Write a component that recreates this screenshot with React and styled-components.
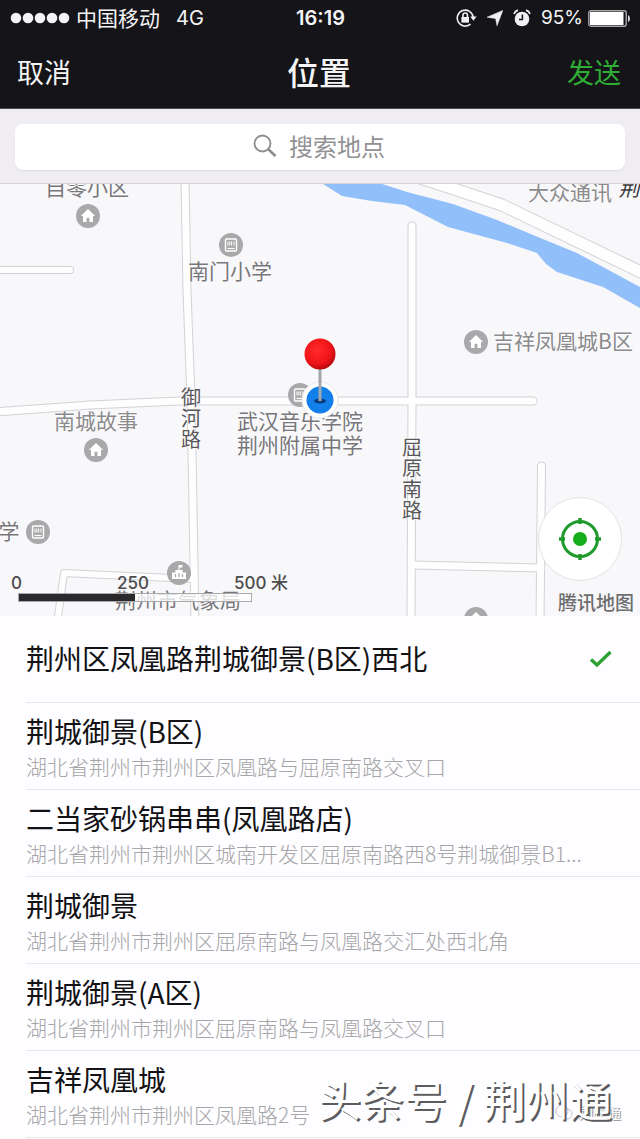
import React from "react";
import styled, { createGlobalStyle } from "styled-components";

const cjk = '"Noto Sans CJK SC", "Noto Sans", sans-serif';
const latin = 'Inter, "Noto Sans CJK SC", sans-serif';

const GlobalStyle = createGlobalStyle`
  *, *::before, *::after { box-sizing: border-box; }
  body { margin: 0; background: #fefdff; font-family: ${cjk}; }
  button, input { font-family: inherit; }
`;

const Page = styled.div`
  position: relative;
  min-height: 100vh;
  overflow: hidden;
`;

const TopBar = styled.header`
  background: #151418;
  color: #f4f4f6;
  border-bottom: 1px solid #4a494c;
`;

const StatusBar = styled.div`
  display: grid;
  grid-template-columns: 1fr auto 1fr;
  align-items: center;
  height: 36px;
  padding: 0 9px 0 10px;
  font-family: ${latin};
  font-size: 20px;
  line-height: 24px;
`;

const StatusGroup = styled.div`
  display: flex;
  align-items: center;
  justify-content: ${(p) => (p.$end ? "flex-end" : "flex-start")};
  gap: ${(p) => p.$gap}px;
`;

const Carrier = styled.span`
  padding-bottom: 2px;
  font-family: ${cjk};
  font-size: 21px;
  margin-right: 10px;
`;

const Clock = styled.time`
  font-weight: 600;
`;

const Charge = styled.span`
  font-size: 19px;
`;

const NavBar = styled.nav`
  display: grid;
  grid-template-columns: 1fr auto 1fr;
  align-items: center;
  height: 72px;
  padding: 0 19px 0 17px;
`;

const NavButton = styled.button`
  justify-self: ${(p) => (p.$end ? "end" : "start")};
  padding: 0;
  border: 0;
  background: none;
  color: ${(p) => (p.$end ? "#2fae35" : "#f4f4f6")};
  font-size: 27px;
  line-height: 36px;
`;

const NavTitle = styled.h1`
  margin: 0;
  padding-bottom: 2px;
  font-size: 32px;
  line-height: 36px;
  font-weight: 500;
`;

const SearchBar = styled.form`
  padding: 15px 15px 13px;
  background: #efedf1;
  border-bottom: 1px solid #d4d2d6;
`;

const SearchField = styled.label`
  display: flex;
  align-items: center;
  justify-content: center;
  gap: 12px;
  height: 46px;
  padding: 0 2px 2px 0;
  border-radius: 8px;
  background: #fff;
  box-shadow: 0 1px 1px #dddbe0;
`;

const SearchInput = styled.input`
  field-sizing: content;
  min-width: 4em;
  padding: 0;
  border: 0;
  outline: 0;
  background: none;
  color: #333;
  font-size: 24px;
  line-height: 36px;
  &::placeholder { color: #929194; opacity: 1; }
`;

const MapView = styled.section`
  position: relative;
  height: 432px;
  overflow: hidden;
  background: #f8f7fa;
`;

const MapDrawing = styled.svg`
  display: block;
  width: 100%;
  height: 100%;
`;

const Placed = styled.div`
  position: absolute;
  left: ${(p) => (p.$x / 640) * 100}%;
  top: ${(p) => p.$y}px;
  transform: translate(-50%, -50%);
`;

const PlaceName = styled(Placed)`
  color: ${(p) => p.$color || "#77767a"};
  font-size: 21px;
  line-height: 24px;
  white-space: nowrap;
  text-shadow: 0 0 2px #fff, 0 0 2px #fff;
`;

const RoadName = styled(Placed)`
  width: 20px;
  color: #58575a;
  font-size: 20px;
  line-height: 21px;
  text-align: center;
  text-shadow: 0 0 2px #fff, 0 0 2px #fff;
`;

const TiltedName = styled(PlaceName)`
  color: #3c3b3e;
  font-style: italic;
`;

const Marker = styled(Placed)`
  width: 24px;
  height: 24px;
  svg { display: block; }
`;

const PinPlace = styled(Placed)`
  svg { display: block; }
`;

const MapControls = styled.div`
  position: absolute;
  inset: 0;
  display: flex;
  align-items: flex-end;
  justify-content: space-between;
  padding: 0 6px 2px 11px;
`;

const ScaleRuler = styled.div`
  padding-bottom: 12px;
  color: #4c4b4e;
  font-family: ${latin};
  font-size: 17px;
  font-weight: 500;
  line-height: 20px;
`;

const ScaleLabels = styled.div`
  display: grid;
  grid-template-columns: 106px 117px auto;
`;

const ScaleBar = styled.div`
  width: 234px;
  height: 9px;
  margin-left: 7px;
  border: 1px solid #aaa9ab;
  background: linear-gradient(90deg, #2b292c 50%, rgba(255, 255, 255, 0.75) 50%);
`;

const LocateColumn = styled.div`
  display: flex;
  flex-direction: column;
  align-items: flex-end;
  gap: 9px;
`;

const LocateButton = styled.button`
  display: grid;
  place-items: center;
  width: 84px;
  height: 84px;
  margin-right: 12px;
  padding: 0;
  border: 1px solid #e4e3e6;
  border-radius: 50%;
  background: #fff;
`;

const Provider = styled.span`
  color: #6e6d70;
  font-size: 19px;
  font-weight: 500;
  line-height: 24px;
`;

const PlaceList = styled.ul`
  margin: 0;
  padding: 0;
  list-style: none;
`;

const PlaceItem = styled.li`
  padding-left: 26px;
`;

const PlaceButton = styled.button`
  display: flex;
  align-items: center;
  justify-content: space-between;
  width: 100%;
  height: 87px;
  padding: 0 27px 2px 0;
  border: 0;
  border-bottom: 1px solid #e9e8eb;
  background: none;
  text-align: left;
`;

const PlaceText = styled.span`
  display: flex;
  flex-direction: column;
  gap: 5px;
  min-width: 0;
`;

const PlaceTitle = styled.span`
  color: #131215;
  font-size: 28px;
  line-height: 36px;
  white-space: nowrap;
`;

const PlaceAddress = styled.span`
  color: #a6a5a8;
  font-size: 21px;
  line-height: 24px;
  font-weight: 300;
  white-space: nowrap;
`;

const Watermark = styled.div`
  position: absolute;
  right: 28px;
  bottom: 16px;
  color: #fff;
  font-size: 43px;
  line-height: 50px;
  white-space: nowrap;
  text-shadow: 2px 2px 0 #5c5b5e;
`;

const AccountMark = styled.div`
  position: absolute;
  right: 19px;
  bottom: 17px;
  display: flex;
  align-items: center;
  gap: 6px;
  color: #fff;
  font-size: 14px;
  line-height: 20px;
  text-shadow: 1px 1px 0 #999, -1px 0 0 #bbb;
`;

const SignalDots = () => (
  <svg width="60" height="12" viewBox="0 0 60 12" aria-hidden="true" fill="#f4f4f6">
    {[6, 18, 30, 42, 54].map((x) => <circle key={x} cx={x} cy="6" r="5.3" />)}
  </svg>
);

const RotationLock = () => (
  <svg width="21" height="20" viewBox="0 0 21 20" aria-hidden="true" fill="none" stroke="#f0f0f2" strokeWidth="1.6">
    <path d="M14.5 16.2A8 8 0 1 1 17.2 9" />
    <path d="M14.2 8.6h6.4l-3.2 4.2z" fill="#f0f0f2" stroke="none" />
    <rect x="5.4" y="9" width="7.6" height="5.6" fill="#f0f0f2" stroke="none" />
    <path d="M7 9V7.2a2.2 2.2 0 0 1 4.4 0V9" />
  </svg>
);

const LocationArrow = () => (
  <svg width="16" height="16" viewBox="0 0 16 16" aria-hidden="true" fill="#f0f0f2">
    <path d="M15.8.4 10 15.8 8.600 8.600 0 7.200z" stroke="#f0f0f2" strokeWidth=".5" />
  </svg>
);

const AlarmClock = () => (
  <svg width="18" height="18" viewBox="0 0 18 18" aria-hidden="true" fill="none">
    <circle cx="9" cy="10" r="7.300" fill="#f0f0f2" />
    <path d="M1 5Q2 2 5 1.200M17 5Q16 2 13 1.200" stroke="#f0f0f2" strokeWidth="1.8" />
    <path d="M9.400 5.600V10.600H6" stroke="#151418" strokeWidth="1.5" />
  </svg>
);

const Battery = () => (
  <svg width="43" height="17" viewBox="0 0 43 17" aria-hidden="true">
    <rect x=".8" y=".8" width="37.4" height="15.4" rx="2" fill="none" stroke="#a9a9ac" strokeWidth="1.4" />
    <rect x="2" y="2" width="33.5" height="13" fill="#fff" />
    <path d="M40 5q2 1 2 3.500t-2 3.500z" fill="#dcdcde" />
  </svg>
);

const Magnifier = () => (
  <svg width="24" height="24" viewBox="0 0 24 24" aria-hidden="true" fill="none" stroke="#8c8b8e">
    <circle cx="9.500" cy="9.500" r="8" strokeWidth="1.8" />
    <path d="M15.500 15.500 22.500 22" strokeWidth="2.600" />
  </svg>
);

const glyphs = {
  home: <path d="M12 5 4.800 12H7v6h3.600v-4.200h2.800V18H17v-6h2.200z" fill="#fff" />,
  school: (
    <g fill="none" stroke="#fff">
      <rect x="6.500" y="6" width="11" height="12" rx="1" strokeWidth="1.4" />
      <path d="M9 8.500v4M10.800 8.500v4M12.600 8.500v4M15 8.500v4" strokeWidth="1" />
      <path d="M8.500 15.500h7" strokeWidth="1.2" />
    </g>
  ),
  office: (
    <g>
      <path d="M11.400 4h4v2.600h-2.800V9h3v2.400H19V18H5v-6.600h3.400V9h3z" fill="#fff" />
      <path d="M8.500 13v3M12 12v4M15.500 13v3" stroke="#a9a8ab" strokeWidth="1.2" />
    </g>
  ),
};

const Poi = ({ kind, x, y }) => (
  <Marker $x={x} $y={y}>
    <svg width="24" height="24" viewBox="0 0 24 24" aria-hidden="true">
      <circle cx="12" cy="12" r="12" fill="#a9a8ab" />
      {glyphs[kind]}
    </svg>
  </Marker>
);

const pois = [
  { kind: "home", x: 88, y: 32 },
  { kind: "school", x: 231, y: 61 },
  { kind: "home", x: 476, y: 158 },
  { kind: "school", x: 300, y: 211 },
  { kind: "home", x: 96, y: 266 },
  { kind: "school", x: 38, y: 348 },
  { kind: "office", x: 179, y: 389 },
  { kind: "home", x: 476, y: 435 },
];

const soft = "#8b8a8d";

const names = [
  { text: "自零小区", x: 87, y: 2 },
  { text: "南门小学", x: 230, y: 86 },
  { text: "大众通讯", x: 570, y: 7, color: soft },
  { text: "吉祥凤凰城B区", x: 563, y: 156, color: soft },
  { text: "南城故事", x: 96, y: 236, color: soft },
  { text: "武汉音乐学院\n荆州附属中学", x: 300, y: 248 },
  { text: "学", x: 9, y: 346 },
  { text: "荆州市气象局", x: 178, y: 415 },
];

const roads = [
  { d: "M185 -5 187 106 191 216 192 266 195 440", w: 7 },
  { d: "M-5 228 90 221 180 217H533", w: 7 },
  { d: "M412 42V216L411 440", w: 7 },
  { d: "M412 381 541 384", w: 7 },
  { d: "M541.500 282 540 440", w: 7 },
  { d: "M-5 86H70", w: 6 },
  { d: "M57 440 64 389 193 395", w: 6 },
  { d: "M420 -6 445 2 502 21 645 90", w: 11 },
];

const Roads = () => (
  <MapDrawing viewBox="0 0 640 432" preserveAspectRatio="none" aria-hidden="true">
    <g fill="none" strokeLinecap="round" strokeLinejoin="round">
      {roads.map((r) => <path key={r.d} d={r.d} stroke="#d3d2d5" strokeWidth={r.w + 2} />)}
      {roads.map((r) => <path key={r.d} d={r.d} stroke="#fefeff" strokeWidth={r.w} />)}
    </g>
    <path
      d="M320 -2 342 12 372 17 405 21 448 43 507 59 537 69 546 80 557 88 603 103 640 124V103L577 69 533 51 497 36 453 20 407 8 376 -2z"
      fill="#91bffa"
    />
  </MapDrawing>
);

const Pin = () => (
  <svg width="44" height="86" viewBox="0 0 44 86" aria-hidden="true">
    <defs>
      <radialGradient id="ball" cx="42%" cy="38%" r="62%">
        <stop offset="0" stopColor="#ff2b2b" />
        <stop offset=".7" stopColor="#f01418" />
        <stop offset="1" stopColor="#b80a0e" />
      </radialGradient>
    </defs>
    <circle cx="22" cy="66" r="18" fill="#fff" stroke="#e9e8ea" />
    <circle cx="22" cy="66" r="13.500" fill="#1180ea" />
    <ellipse cx="22" cy="67" rx="6" ry="2.500" fill="#0a3d80" />
    <path d="M22 34V67" stroke="#a3a6ad" strokeWidth="3" />
    <circle cx="22" cy="20" r="15.500" fill="url(#ball)" />
  </svg>
);

const Target = () => (
  <svg width="44" height="44" viewBox="0 0 44 44" aria-hidden="true">
    <circle cx="22" cy="22" r="17.500" fill="none" stroke="#1f9a2c" strokeWidth="3" />
    <path d="M22 1v6M22 37v6M1 22h6M37 22h6" stroke="#1f9a2c" strokeWidth="3.500" />
    <circle cx="22" cy="22" r="7" fill="#16ad1c" />
  </svg>
);

const Check = () => (
  <svg width="24" height="20" viewBox="0 0 24 20" role="img" aria-label="已选择" fill="none">
    <path d="M2 11.500 8 17 21.500 4" stroke="#2ba233" strokeWidth="3.400" />
  </svg>
);

const places = [
  { title: "荆州区凤凰路荆城御景(B区)西北", selected: true },
  { title: "荆城御景(B区)", address: "湖北省荆州市荆州区凤凰路与屈原南路交叉口" },
  { title: "二当家砂锅串串(凤凰路店)", address: "湖北省荆州市荆州区城南开发区屈原南路西8号荆城御景B1..." },
  { title: "荆城御景", address: "湖北省荆州市荆州区屈原南路与凤凰路交汇处西北角" },
  { title: "荆城御景(A区)", address: "湖北省荆州市荆州区屈原南路与凤凰路交叉口" },
  { title: "吉祥凤凰城", address: "湖北省荆州市荆州区凤凰路2号" },
];

export default function App() {
  return (
    <Page>
      <GlobalStyle />
      <TopBar>
        <StatusBar>
          <StatusGroup $gap={6}>
            <SignalDots />
            <Carrier>中国移动</Carrier>
            <span>4G</span>
          </StatusGroup>
          <Clock>16:19</Clock>
          <StatusGroup $end $gap={10}>
            <RotationLock />
            <LocationArrow />
            <AlarmClock />
            <StatusGroup $gap={5}>
              <Charge>95%</Charge>
              <Battery />
            </StatusGroup>
          </StatusGroup>
        </StatusBar>
        <NavBar>
          <NavButton type="button">取消</NavButton>
          <NavTitle>位置</NavTitle>
          <NavButton type="button" $end>发送</NavButton>
        </NavBar>
      </TopBar>

      <SearchBar role="search">
        <SearchField>
          <Magnifier />
          <SearchInput type="text" placeholder="搜索地点" aria-label="搜索地点" />
        </SearchField>
      </SearchBar>

      <MapView aria-label="地图">
        <Roads />
        {pois.map((p) => <Poi key={`${p.x}-${p.y}`} {...p} />)}
        {names.map((n) => (
          <PlaceName key={n.text} $x={n.x} $y={n.y} $color={n.color}>
            {n.text.split("\n").map((line) => <div key={line}>{line}</div>)}
          </PlaceName>
        ))}
        <TiltedName $x={629} $y={3}>荆</TiltedName>
        <RoadName $x={191} $y={233}>御河路</RoadName>
        <RoadName $x={412} $y={294}>屈原南路</RoadName>
        <PinPlace $x={320} $y={193}><Pin /></PinPlace>
        <MapControls>
          <ScaleRuler>
            <ScaleLabels>
              <span>0</span>
              <span>250</span>
              <span>500 米</span>
            </ScaleLabels>
            <ScaleBar />
          </ScaleRuler>
          <LocateColumn>
            <LocateButton type="button" aria-label="定位"><Target /></LocateButton>
            <Provider>腾讯地图</Provider>
          </LocateColumn>
        </MapControls>
      </MapView>

      <PlaceList>
        {places.map((p) => (
          <PlaceItem key={p.title}>
            <PlaceButton type="button" aria-pressed={!!p.selected}>
              <PlaceText>
                <PlaceTitle>{p.title}</PlaceTitle>
                {p.address && <PlaceAddress>{p.address}</PlaceAddress>}
              </PlaceText>
              {p.selected && <Check />}
            </PlaceButton>
          </PlaceItem>
        ))}
      </PlaceList>

      <AccountMark>
        <svg width="18" height="16" viewBox="0 0 18 16" aria-hidden="true" fill="none" stroke="#c4c3c6">
          <circle cx="7" cy="7" r="6" />
          <circle cx="12" cy="10" r="5" />
        </svg>
        荆州通
      </AccountMark>
      <Watermark>头条号 / 荆州通</Watermark>
    </Page>
  );
}
